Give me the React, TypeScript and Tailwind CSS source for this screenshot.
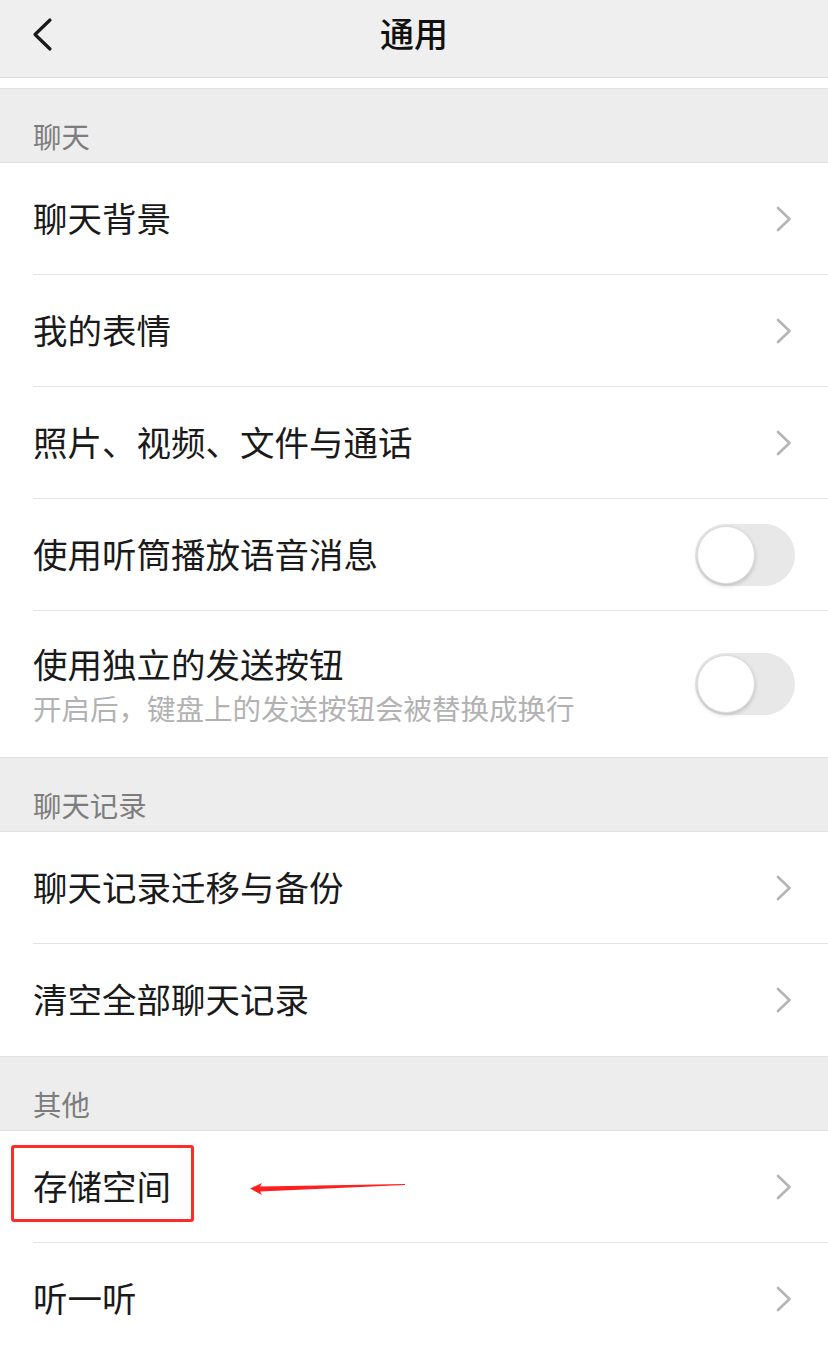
import React from 'react';

const font = { fontFamily: '"Noto Sans CJK SC", "Noto Sans", sans-serif' };

function Chevron() {
  return (
    <svg width="16" height="26" viewBox="0 0 16 26" fill="none" aria-hidden="true">
      <path d="M2 2 L13.5 13 L2 24" stroke="#b4b4b4" strokeWidth="2.6" strokeLinecap="round" strokeLinejoin="round" />
    </svg>
  );
}

function Toggle() {
  return (
    <div className="w-[100px] h-[62px] rounded-full bg-[#e8e8e8] p-[2px] flex items-center">
      <div className="w-[58px] h-[58px] rounded-full bg-white border border-[#dcdcdc] shadow-[0_2px_4px_rgba(0,0,0,0.18)]" />
    </div>
  );
}

function Section({ title }: { title: string }) {
  return (
    <div className="h-[75px] bg-[#ededed] border-y border-[#e0e0e0] flex items-end pl-[33px] pb-[6px]">
      <span className="text-[28.4px] leading-[40px] text-[#7d7d7d]">{title}</span>
    </div>
  );
}

interface RowProps {
  label: string;
  sub?: string;
  toggle?: boolean;
  last?: boolean;
  children?: React.ReactNode;
}

function Row({ label, sub, toggle, last, children }: RowProps) {
  return (
    <div className={`relative bg-white pl-[33px] ${sub ? 'h-[146px]' : 'h-[112px]'}`}>
      <div className={`h-full flex items-center ${toggle ? 'pr-[33px]' : 'pr-[36px]'} ${last ? '' : 'border-b border-[#e3e3e3]'}`}>
        <div className={`flex-1 flex flex-col ${sub ? '' : 'mb-[4px]'}`}>
          <span className="text-[34.5px] leading-[46px] text-[#1a1a1a]">{label}</span>
          {sub && <span className="text-[28.5px] leading-[40px] text-[#b2b2b2] mt-[2px]">{sub}</span>}
        </div>
        {toggle ? <Toggle /> : <Chevron />}
      </div>
      {children}
    </div>
  );
}

export default function App() {
  return (
    <div className="w-[828px] h-[1351px] overflow-hidden bg-white" style={font}>
      <header className="h-[78px] bg-[#efefef] border-b border-[#dedede] relative flex items-center justify-center">
        <svg className="absolute left-[30px] top-[17px]" width="26" height="36" viewBox="0 0 26 36" fill="none" aria-hidden="true">
          <path d="M20 3 L5 17.5 L20 32" stroke="#1a1a1a" strokeWidth="3.2" strokeLinecap="round" strokeLinejoin="round" />
        </svg>
        <h1 className="text-[34px] font-medium text-[#111] leading-none -mt-[12px]">通用</h1>
      </header>
      <div className="h-[10px] bg-white" />

      <Section title="聊天" />
      <Row label="聊天背景" />
      <Row label="我的表情" />
      <Row label="照片、视频、文件与通话" />
      <Row label="使用听筒播放语音消息" toggle />
      <Row label="使用独立的发送按钮" sub="开启后，键盘上的发送按钮会被替换成换行" toggle last />

      <Section title="聊天记录" />
      <Row label="聊天记录迁移与备份" />
      <Row label="清空全部聊天记录" last />

      <Section title="其他" />
      <Row label="存储空间">
        <div className="absolute left-[11px] top-[14px] w-[183px] h-[77px] border-[3px] border-[#ff2a2a] rounded-[3px]" />
        <svg className="absolute left-[250px] top-[50px]" width="156" height="16" viewBox="0 0 156 16" aria-hidden="true">
          <polygon points="0,7.5 12,2 10,5.5 155,3 155,4 10,10.5 12,14" fill="#ff1f1f" />
        </svg>
      </Row>
      <Row label="听一听" last />
    </div>
  );
}
